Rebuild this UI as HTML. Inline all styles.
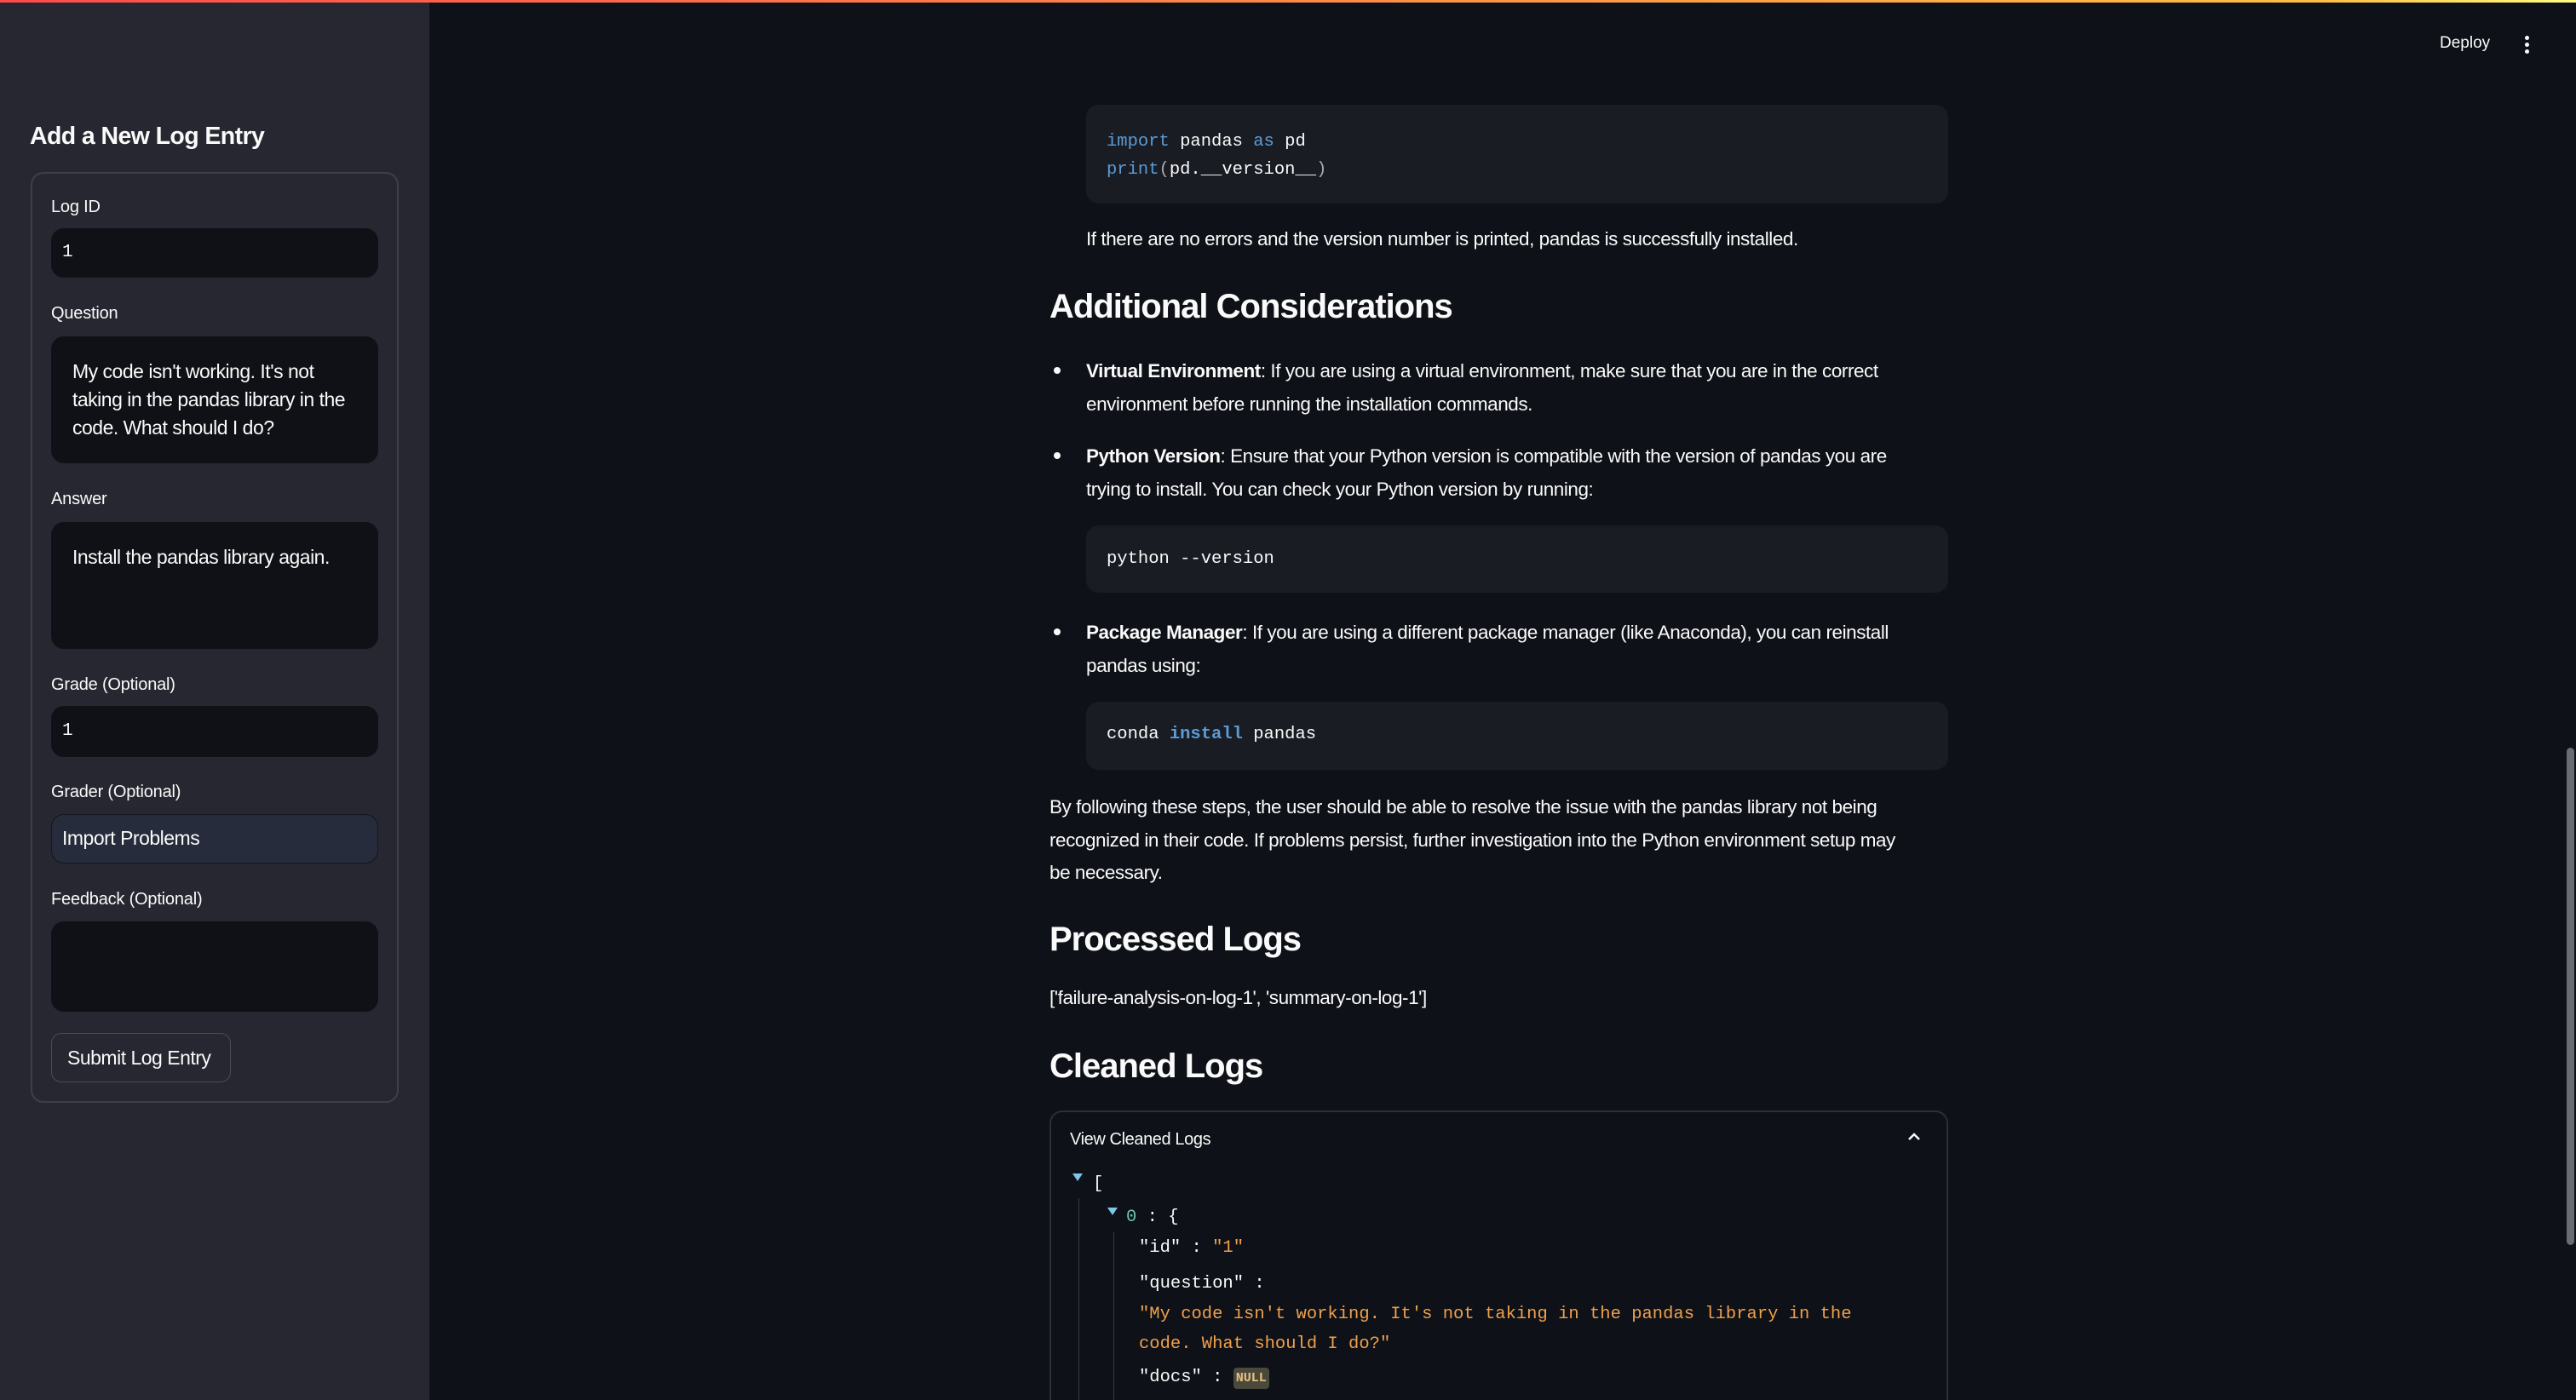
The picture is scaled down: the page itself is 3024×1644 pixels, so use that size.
<!DOCTYPE html>
<html><head><meta charset="utf-8"><style>
*{margin:0;padding:0;box-sizing:border-box}
html,body{width:3024px;height:1644px;overflow:hidden;background:#0e1117;font-family:"Liberation Sans",sans-serif;color:#fafafa}
#root{position:relative;width:3024px;height:1644px;overflow:hidden}
.a{position:absolute;white-space:nowrap}
#top{position:absolute;left:0;top:0;width:3024px;height:3px;background:linear-gradient(90deg,#ff4b4b,#ffbd45 90%,#fffd80)}
#side{position:absolute;left:0;top:3px;width:504px;height:1641px;background:#262730}
.lbl{font-size:20px;color:#fafafa;letter-spacing:-0.2px}
.inp{position:absolute;left:60px;width:384px;background:#0f1116;border-radius:15px}
.sb{font-size:23px;letter-spacing:-0.5px}
.m{font-family:"Liberation Mono",monospace;font-size:20.5px}
.code{position:absolute;left:1275px;width:1012px;background:#1a1c24;border-radius:15px}
.p{font-size:22.5px;letter-spacing:-0.45px}
.h2{font-size:40px;font-weight:bold;letter-spacing:-1px}
.kw{color:#5c9bd6}
.bul{position:absolute;left:1237px;width:8px;height:8px;border-radius:50%;background:#fafafa}
.or{color:#f0a04b}
</style></head><body><div id="root">
<div id="top"></div>
<div id="side">
<div class="a" style="left:35px;top:137px;font-size:28.5px;font-weight:bold;letter-spacing:-0.6px;line-height:40px">Add a New Log Entry</div>
<div style="position:absolute;left:36px;top:199px;width:432px;height:1093px;border:2px solid #3d3f4a;border-radius:15px"></div>
</div>
<div class="a lbl" style="left:60px;top:232px">Log ID</div>
<div class="inp" style="top:268px;height:58px"></div>
<div class="a m" style="left:73px;top:285px;font-size:21px">1</div>
<div class="a lbl" style="left:60px;top:357px">Question</div>
<div class="inp" style="top:395px;height:149px"></div>
<div class="a sb" style="left:85px;top:420px;line-height:33px">My code isn't working. It's not<br>taking in the pandas library in the<br>code. What should I do?</div>
<div class="a lbl" style="left:60px;top:575px">Answer</div>
<div class="inp" style="top:613px;height:149px"></div>
<div class="a sb" style="left:85px;top:638px;line-height:33px">Install the pandas library again.</div>
<div class="a lbl" style="left:60px;top:793px">Grade (Optional)</div>
<div class="inp" style="top:829px;height:60px"></div>
<div class="a m" style="left:73px;top:847px;font-size:21px">1</div>
<div class="a lbl" style="left:60px;top:919px">Grader (Optional)</div>
<div class="inp" style="top:956px;height:58px;background:#262c3b;border:1px solid #14161c"></div>
<div class="a sb" style="left:73px;top:971px">Import Problems</div>
<div class="a lbl" style="left:60px;top:1045px">Feedback (Optional)</div>
<div class="inp" style="top:1082px;height:106px"></div>
<div style="position:absolute;left:60px;top:1213px;width:211px;height:58px;border:1.5px solid #4a4c56;border-radius:12px"></div>
<div class="a sb" style="left:79px;top:1229px">Submit Log Entry</div>

<div class="a" style="left:2864px;top:40px;font-size:19px">Deploy</div>
<div style="position:absolute;left:2964px;top:42px;width:5px;height:5px;border-radius:50%;background:#fafafa;box-shadow:0 8px 0 #fafafa,0 16px 0 #fafafa"></div>
<div style="position:absolute;left:3013px;top:878px;width:9px;height:584px;border-radius:5px;background:#6b6c72"></div>

<div class="code" style="top:123px;height:116px"></div>
<div class="a m" style="left:1299px;top:150px;line-height:33px"><span class="kw">import</span> pandas <span class="kw">as</span> pd<br><span class="kw">print</span><span style="color:#aaa">(</span>pd.__version__<span style="color:#aaa">)</span></div>
<div class="a p" style="left:1275px;top:268px">If there are no errors and the version number is printed, pandas is successfully installed.</div>
<div class="a h2" style="left:1232px;top:338px">Additional Considerations</div>
<div class="bul" style="top:431px"></div>
<div class="a p" style="left:1275px;top:416px;line-height:39px"><b>Virtual Environment</b>: If you are using a virtual environment, make sure that you are in the correct<br>environment before running the installation commands.</div>
<div class="bul" style="top:531px"></div>
<div class="a p" style="left:1275px;top:516px;line-height:39px"><b>Python Version</b>: Ensure that your Python version is compatible with the version of pandas you are<br>trying to install. You can check your Python version by running:</div>
<div class="code" style="top:617px;height:79px"></div>
<div class="a m" style="left:1299px;top:645px">python --version</div>
<div class="bul" style="top:738px"></div>
<div class="a p" style="left:1275px;top:723px;line-height:39px"><b>Package Manager</b>: If you are using a different package manager (like Anaconda), you can reinstall<br>pandas using:</div>
<div class="code" style="top:824px;height:80px"></div>
<div class="a m" style="left:1299px;top:851px">conda <b class="kw">install</b> pandas</div>
<div class="a p" style="left:1232px;top:929px;line-height:38.5px">By following these steps, the user should be able to resolve the issue with the pandas library not being<br>recognized in their code. If problems persist, further investigation into the Python environment setup may<br>be necessary.</div>
<div class="a h2" style="left:1232px;top:1081px">Processed Logs</div>
<div class="a p" style="left:1232px;top:1159px">['failure-analysis-on-log-1', 'summary-on-log-1']</div>
<div class="a h2" style="left:1232px;top:1230px">Cleaned Logs</div>
<div style="position:absolute;left:1232px;top:1304px;width:1055px;height:400px;border:2px solid #2d2f37;border-radius:15px"></div>
<div class="a" style="left:1256px;top:1327px;font-size:20px;letter-spacing:-0.4px">View Cleaned Logs</div>
<svg style="position:absolute;left:2238px;top:1328px" width="18" height="14"><path d="M3 10 L9 4 L15 10" stroke="#fafafa" stroke-width="2.5" fill="none"/></svg>
<svg style="position:absolute;left:1259px;top:1378px" width="12" height="10"><path d="M0 0 H12 L6 9Z" fill="#7cc8e6"/></svg>
<div class="a m" style="left:1283px;top:1379px">[</div>
<div style="position:absolute;left:1266px;top:1407px;width:1px;height:237px;background:#3a3c44"></div>
<svg style="position:absolute;left:1300px;top:1418px" width="12" height="10"><path d="M0 0 H12 L6 9Z" fill="#7cc8e6"/></svg>
<div class="a m" style="left:1322px;top:1418px"><span style="color:#6cc4b8">0</span> : {</div>
<div style="position:absolute;left:1307px;top:1447px;width:1px;height:197px;background:#3a3c44"></div>
<div class="a m" style="left:1337px;top:1454px">"id" : <span class="or">"1"</span></div>
<div class="a m" style="left:1337px;top:1496px">"question" :</div>
<div class="a m or" style="left:1337px;top:1526px;line-height:35px">"My code isn't working. It's not taking in the pandas library in the<br>code. What should I do?"</div>
<div class="a m" style="left:1337px;top:1606px">"docs" : <span style="background:#4a4a3c;color:#e8c080;font-size:15px;font-weight:bold;padding:4px 3px;border-radius:4px">NULL</span></div>
</div></body></html>
